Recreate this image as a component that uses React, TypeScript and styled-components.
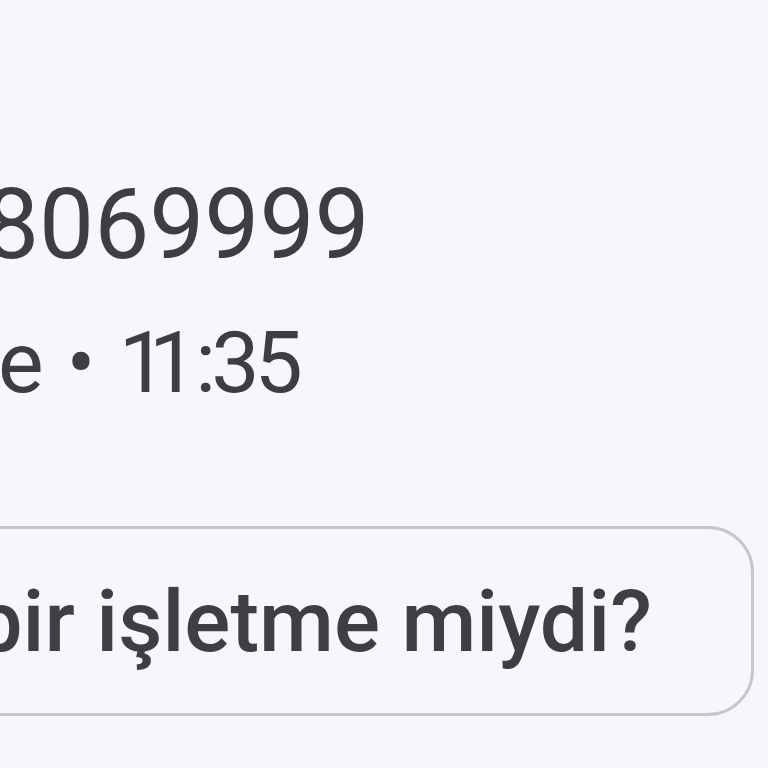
import styled, { createGlobalStyle } from "styled-components";

const GlobalStyle = createGlobalStyle`
	html, body {
		margin: 0;
		padding: 0;
		background: #f7f7fb;
	}
	body {
		font-family: "Roboto", "Noto Sans", sans-serif;
		color: #3d3d44;
	}
`;

type LineProps = {
	$size: number;
	$shift: number;
};

export default function App() {
	return (
		<>
			<GlobalStyle />
			<Screen>
				<Header>
					<Line $size={98} $shift={-16}>8069999</Line>
					<Line $size={86} $shift={-2}>
						e<Dot>•</Dot>
						<Clock>
							<Squeeze $by={-18}>1</Squeeze>
							<Squeeze $by={-2}>1</Squeeze>
							<Squeeze $by={-5}>:35</Squeeze>
						</Clock>
					</Line>
				</Header>
				<ActionRow>
					<BusinessButton type="button">Bu bir işletme miydi?</BusinessButton>
				</ActionRow>
			</Screen>
		</>
	);
}

const Screen = styled.div`
	width: 768px;
	height: 768px;
	overflow: hidden;
	display: flex;
	flex-direction: column;
	padding-top: 176px;
	box-sizing: border-box;
`;

const Header = styled.div`
	display: flex;
	flex-direction: column;
	gap: 46px;
`;

const Line = styled.div<LineProps>`
	font-size: ${(p) => p.$size}px;
	line-height: 1;
	margin-left: ${(p) => p.$shift}px;
	white-space: nowrap;
	color: #3d3d44;
`;

const Dot = styled.span`
	margin-left: 23px;
`;

const Clock = styled.span`
	margin-left: 23px;
`;

const Squeeze = styled.span<{ $by: number }>`
	letter-spacing: ${(p) => p.$by}px;
`;

const ActionRow = styled.div`
	display: flex;
	justify-content: flex-end;
	padding-right: 14px;
	margin-top: 120px;
`;

const BusinessButton = styled.button`
	flex-shrink: 0;
	height: 190px;
	padding: 0 99px 0 60px;
	border: 3px solid #c6c6cb;
	border-radius: 46px;
	background: #f7f7fb;
	font-family: "Roboto", "Noto Sans", sans-serif;
	font-size: 86px;
	font-weight: 500;
	color: #3e3e45;
	white-space: nowrap;
	box-sizing: border-box;
`;
